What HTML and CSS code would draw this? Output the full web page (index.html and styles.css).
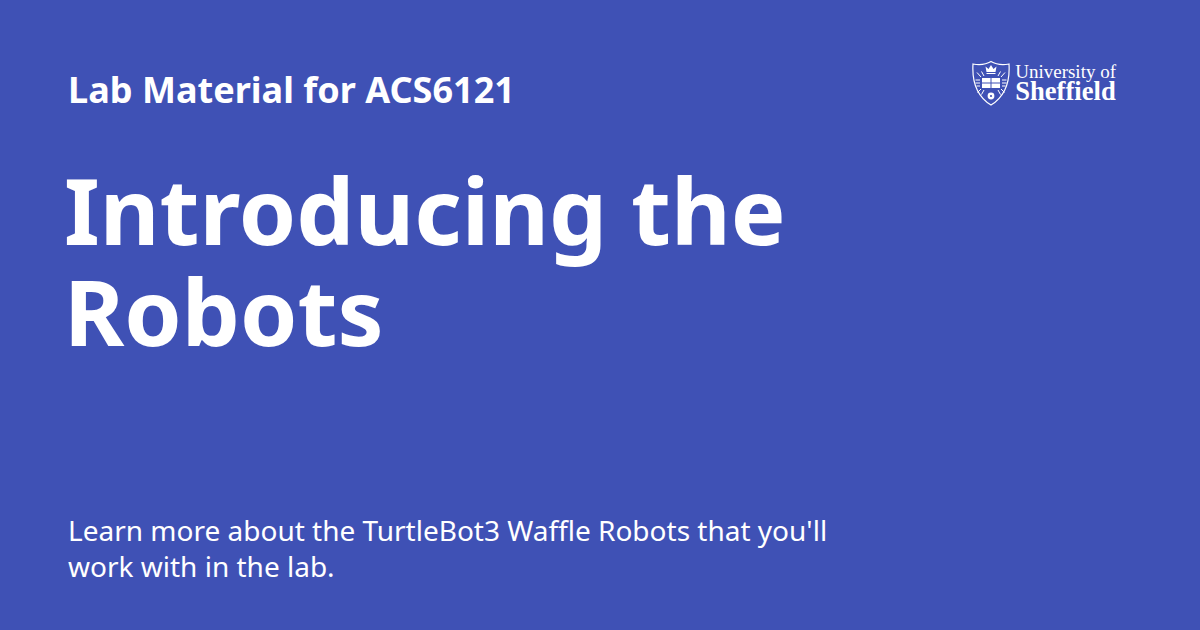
FILE: index.html
```
<!DOCTYPE html>
<html lang="en">
<head>
<meta charset="utf-8">
<title>Introducing the Robots</title>
<link rel="stylesheet" href="styles.css">
</head>
<body>
<main class="card">
  <header class="top">
    <p class="kicker">Lab Material for ACS6121</p>
    <div class="logo">
      <svg class="crest" viewBox="0 0 38 46" width="38" height="46" aria-hidden="true">
        <path d="M1 4C7 5 14 4.5 19 1.5C24 4.5 31 5 37 4C38 20 35 35 19 45C3 35 0 20 1 4Z" fill="none" stroke="#fff" stroke-width="1.2"/>
        <path d="M13.5 6.5L16.5 9L19 5L21.5 9L24.5 6.5L23.5 12H14.5Z" fill="#fff"/>
        <path d="M14.5 13.5H23.5" stroke="#fff" stroke-width="1"/>
        <path d="M10 18H28V28H10Z" fill="#fff"/>
        <path d="M19 18V28M10 23H28" stroke="#3f51b5" stroke-width="1"/>
        <path d="M9 17L5 12.5M12 16L9.5 11.5M26 16L28.5 11.5M29 17L33 12.5M8 20H3.5M30 20H34.5M8 23H3.5M30 23H34.5M8 26H4.5M30 26H33.5M9 29L5.5 32.5M29 29L32.5 32.5M12 30L9.5 34.5M26 30L28.5 34.5" stroke="#fff" stroke-width="1" fill="none"/>
        <circle cx="19" cy="36" r="3.4" fill="#fff"/>
        <circle cx="19" cy="36" r="1.1" fill="#3f51b5"/>
      </svg>
      <div class="wordmark"><span class="w1">University of</span><span class="w2">Sheffield</span></div>
    </div>
  </header>
  <h1 class="title">Introducing the Robots</h1>
  <p class="desc">Learn more about the TurtleBot3 Waffle Robots that you'll work with in the lab.</p>
</main>
</body>
</html>
```
FILE: styles.css
```
html, body { margin: 0; padding: 0; }
body { width: 1200px; height: 630px; overflow: hidden; background: #3f51b5; color: #fff; font-family: "Noto Sans", sans-serif; }
.card { box-sizing: border-box; width: 1200px; height: 630px; padding: 65px 84px 46px 68px; display: flex; flex-direction: column; }
.top { display: flex; justify-content: space-between; align-items: flex-start; }
.kicker { margin: 0 0 2px; font-size: 36.05px; line-height: 48px; font-weight: 700; }
.logo { display: flex; align-items: center; gap: 5px; margin-top: -5px; }
.crest { display: block; }
.wordmark { display: flex; flex-direction: column; gap: 1px; padding-bottom: 2px; font-family: "Liberation Serif", serif; }
.w1 { font-size: 19px; line-height: 17px; }
.w2 { font-size: 26.6px; line-height: 21px; font-weight: 700; }
.title { margin: 44px 0 0 -4px; width: 800px; font-size: 92px; line-height: 101px; font-weight: 700; }
.desc { margin: auto 0 0; width: 800px; font-size: 28px; line-height: 36px; }
```
